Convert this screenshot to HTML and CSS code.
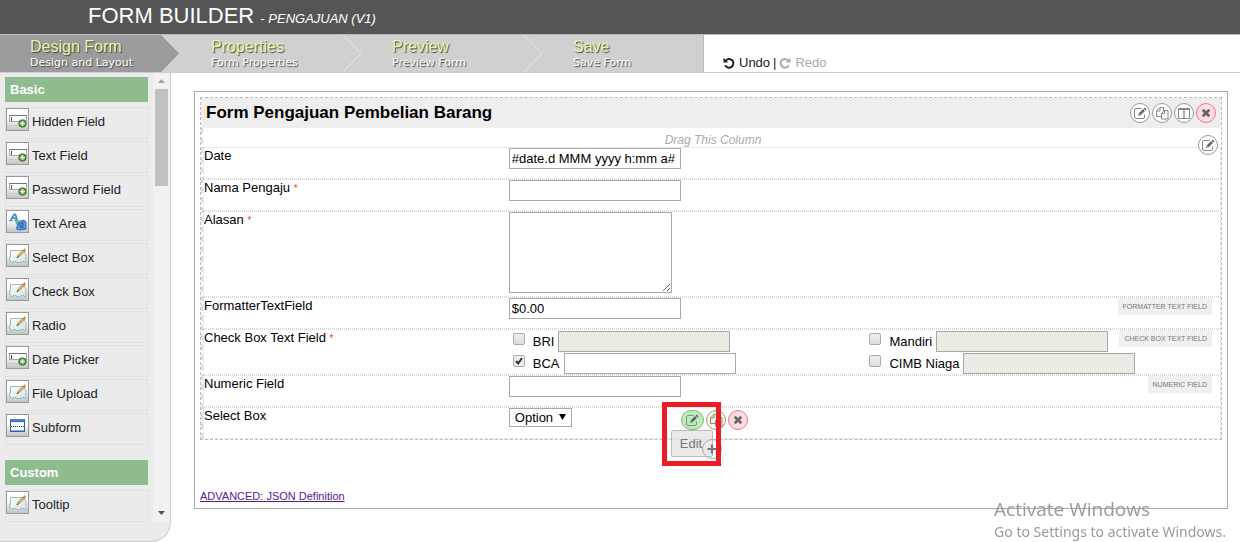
FILE: index.html
```html
<!DOCTYPE html>
<html lang="en">
<head>
<meta charset="utf-8">
<title>Form Builder</title>
<link rel="stylesheet" href="styles.css">
</head>
<body>
<svg class="defs" width="0" height="0" aria-hidden="true">
  <defs>
    <linearGradient id="tile" x1="0" y1="0" x2="0" y2="1"><stop offset="0.4" stop-color="#fff"/><stop offset="1" stop-color="#c4c4c4"/></linearGradient>
    <linearGradient id="paper" x1="0" y1="0" x2="1" y2="1"><stop offset="0" stop-color="#fff"/><stop offset="1" stop-color="#cfe3e5"/></linearGradient>
  </defs>
  <symbol id="p-field" viewBox="0 0 21 21">
    <rect width="21" height="21" fill="url(#tile)"/>
    <path d="M2 16.500H14" stroke="#c8c8c8"/>
    <rect x="2.500" y="6.500" width="17" height="6" fill="#fff" stroke="#a5a5a5"/>
    <path d="M2 6.500H20" stroke="#777"/><path d="M4.500 8v4" stroke="#555"/>
    <circle cx="15.500" cy="14.500" r="3.800" fill="#58943a" stroke="#356e20" stroke-width=".8"/>
    <path d="M15.500 12.200v4.600M13.200 14.500h4.600" stroke="#fff" stroke-width="1.600"/>
  </symbol>
  <symbol id="p-area" viewBox="0 0 21 21">
    <rect width="21" height="21" fill="url(#tile)"/>
    <path d="M2.500 9.500h3M4 8.500l3-5h1.500l1.500 5M8.500 9.500h3M5 7h4.500" fill="none" stroke="#3f7fd0" stroke-width="1.500"/>
    <path d="M8 8l3 6M9 13l4-2" fill="none" stroke="#6db567" stroke-width="1.800"/>
    <path d="M12 10.500l5-1.500 2 2v7l-7 1-3-1.500 2-3.500z" fill="#5f98e2" stroke="#2f6bbd"/>
    <path d="M13 12.500l3-1v3l-3 1zM13 17l4-1" fill="none" stroke="#2b5aa5"/>
  </symbol>
  <symbol id="p-edit" viewBox="0 0 21 21">
    <rect width="21" height="21" fill="url(#tile)"/>
    <path d="M3.500 5.500H17.500V8L19 9v8.500h-2v-1h-3v1H9v-1H6v1H3.500v-2h-1v-3h1z" fill="url(#paper)" stroke="#9dbcc1"/>
    <path d="M11 11.500l6-6" stroke="#9a6b34" stroke-width="2.400"/>
    <path d="M11.300 11.200l5.200-5.200" stroke="#f4c75c" stroke-width="1.200"/>
    <path d="M17 5.500l1.300-1.300" stroke="#c8845c" stroke-width="2.400"/>
    <path d="M9.800 12.700l1.400-.9" stroke="#444" stroke-width="1.100"/>
  </symbol>
  <symbol id="p-subform" viewBox="0 0 21 21">
    <rect width="21" height="21" fill="url(#tile)"/>
    <rect x="3.500" y="4.500" width="14" height="12" fill="#f4f8ff" stroke="#315fac"/>
    <path d="M3 5.500h15" stroke="#3767b5" stroke-width="3"/><path d="M4 5h13" stroke="#6d9bdd"/>
    <path d="M4 11.500h13" stroke="#333" stroke-dasharray="1 1"/>
    <path d="M4 16h13" stroke="#315fac"/>
  </symbol>
  <symbol id="a-edit" viewBox="0 0 18 18">
    <path d="M10.500 4.500H5Q3.500 4.500 3.500 6v7q0 1.500 1.500 1.500h7q1.500 0 1.500-1.500V10.500" fill="none" stroke="#888"/>
    <path d="M8.500 10.500l4.500-4.500" stroke="#666" stroke-width="2.500"/><path d="M13.500 5.500l1.200-1.200" stroke="#666" stroke-width="2.500"/>
    <path d="M7 12l.6-2 1.400 1.400z" fill="#666"/>
  </symbol>
  <symbol id="a-copy" viewBox="0 0 18 18">
    <path d="M8 12.500H3.500V7L7 3.500h3.500V7M7 3.500V7H3.500M8.500 9.500L11 6.500h4v8.500H8.500zM11.500 6.500v3h-3" fill="none" stroke="#888"/>
  </symbol>
  <symbol id="a-cols" viewBox="0 0 18 18">
    <rect x="3.500" y="4.500" width="11" height="10" fill="none" stroke="#888"/><path d="M3 5h12" stroke="#888" stroke-width="2"/><path d="M9 4v10" stroke="#888" stroke-width="1.400"/>
  </symbol>
  <symbol id="a-close" viewBox="0 0 18 18">
    <path d="M5.700 5.700l6.600 6.600M12.300 5.700l-6.600 6.600" stroke="#666" stroke-width="2.700"/>
  </symbol>
  <symbol id="a-plus" viewBox="0 0 18 18">
    <path d="M9 4.500v9M4.500 9h9" stroke="#777" stroke-width="2.200"/>
  </symbol>
  <symbol id="undo" viewBox="0 0 12 12">
    <path d="M2.600 3.800A4.300 4.300 0 1 1 2.200 8.200" fill="none" stroke="currentColor" stroke-width="2"/>
    <path d="M.5.800v4.700h4.700z" fill="currentColor"/>
  </symbol>
</svg>

<header class="top"><h1 class="top-title">FORM BUILDER <i class="top-name">- PENGAJUAN (V1)</i></h1></header>

<nav class="bar">
  <a class="step step-active" href="#design"><span class="step-text"><span class="step-title">Design Form</span><span class="step-note">Design and Layout</span></span>
    <svg class="chevron" viewBox="0 0 19 37" width="19" height="37"><path d="M0 0H19V37H0L18 18.500z" fill="#d0d0d0"/><path d="M0 0L18 18.500L0 37" fill="none" stroke="#e8e8e8"/></svg></a>
  <a class="step" href="#properties"><span class="step-text"><span class="step-title">Properties</span><span class="step-note">Form Properties</span></span>
    <svg class="chevron" viewBox="0 0 19 37" width="19" height="37"><path d="M0 0L18 18.500L0 37" fill="none" stroke="#e8e8e8"/></svg></a>
  <a class="step" href="#preview"><span class="step-text"><span class="step-title">Preview</span><span class="step-note">Preview Form</span></span>
    <svg class="chevron" viewBox="0 0 19 37" width="19" height="37"><path d="M0 0L18 18.500L0 37" fill="none" stroke="#e8e8e8"/></svg></a>
  <a class="step step-last" href="#save"><span class="step-text"><span class="step-title">Save</span><span class="step-note">Save Form</span></span></a>
  <div class="history">
    <button class="hist" type="button"><svg width="12" height="12"><use href="#undo"/></svg>Undo</button>
    <span>|</span>
    <button class="hist hist-off" type="button"><svg class="flip" width="12" height="12"><use href="#undo"/></svg>Redo</button>
  </div>
</nav>

<div class="work">
  <aside class="side">
    <div class="side-view">
      <div class="palette">
        <h2 class="group">Basic</h2>
        <ul class="items">
          <li class="item"><svg class="tile"><use href="#p-field"/></svg>Hidden Field</li>
          <li class="item"><svg class="tile"><use href="#p-field"/></svg>Text Field</li>
          <li class="item"><svg class="tile"><use href="#p-field"/></svg>Password Field</li>
          <li class="item"><svg class="tile"><use href="#p-area"/></svg>Text Area</li>
          <li class="item"><svg class="tile"><use href="#p-edit"/></svg>Select Box</li>
          <li class="item"><svg class="tile"><use href="#p-edit"/></svg>Check Box</li>
          <li class="item"><svg class="tile"><use href="#p-edit"/></svg>Radio</li>
          <li class="item"><svg class="tile"><use href="#p-field"/></svg>Date Picker</li>
          <li class="item"><svg class="tile"><use href="#p-edit"/></svg>File Upload</li>
          <li class="item"><svg class="tile"><use href="#p-subform"/></svg>Subform</li>
        </ul>
        <h2 class="group">Custom</h2>
        <ul class="items">
          <li class="item"><svg class="tile"><use href="#p-edit"/></svg>Tooltip</li>
        </ul>
      </div>
      <div class="scroll" aria-hidden="true">
        <svg width="7" height="4"><path d="M0 4L3.500 0 7 4z" fill="#a3a3a3"/></svg>
        <span class="thumb"></span>
        <svg width="7" height="4"><path d="M0 0L3.500 4 7 0z" fill="#505050"/></svg>
      </div>
    </div>
  </aside>

  <main class="canvas">
    <section class="section">
      <header class="section-head">
        <h2 class="section-title">Form Pengajuan Pembelian Barang</h2>
        <div class="actions">
          <button class="act" type="button" aria-label="Edit section"><svg width="18" height="18"><use href="#a-edit"/></svg></button>
          <button class="act" type="button" aria-label="Copy section"><svg width="18" height="18"><use href="#a-copy"/></svg></button>
          <button class="act" type="button" aria-label="Columns"><svg width="18" height="18"><use href="#a-cols"/></svg></button>
          <button class="act act-del" type="button" aria-label="Delete section"><svg width="18" height="18"><use href="#a-close"/></svg></button>
        </div>
      </header>
      <div class="column">
        <p class="drag">Drag This Column</p>
        <button class="act act-column" type="button" aria-label="Edit column"><svg width="18" height="18"><use href="#a-edit"/></svg></button>
        <div class="rows">
          <div class="row"><label class="label" for="date">Date</label><div class="field"><input class="text" id="date" type="text" value="#date.d MMM yyyy h:mm a#"></div></div>
          <div class="row"><label class="label" for="nama">Nama Pengaju <span class="req">*</span></label><div class="field"><input class="text" id="nama" type="text"></div></div>
          <div class="row"><label class="label" for="alasan">Alasan <span class="req">*</span></label><div class="field"><textarea class="area" id="alasan"></textarea></div></div>
          <div class="row"><label class="label" for="fmt">FormatterTextField</label><div class="field"><input class="text" id="fmt" type="text" value="$0.00"></div><span class="kind">FORMATTER TEXT FIELD</span></div>
          <div class="row"><span class="label">Check Box Text Field <span class="req">*</span></span>
            <div class="field checks">
              <div class="check"><input class="tick" type="checkbox" id="bri"><label for="bri">BRI</label><input class="text" type="text" aria-label="BRI value" disabled></div>
              <div class="check"><input class="tick" type="checkbox" id="mandiri"><label for="mandiri">Mandiri</label><input class="text" type="text" aria-label="Mandiri value" disabled></div>
              <div class="check"><input class="tick" type="checkbox" id="bca" checked><label for="bca">BCA</label><input class="text" type="text" aria-label="BCA value"></div>
              <div class="check"><input class="tick" type="checkbox" id="cimb"><label for="cimb">CIMB Niaga</label><input class="text" type="text" aria-label="CIMB Niaga value" disabled></div>
            </div><span class="kind">CHECK BOX TEXT FIELD</span></div>
          <div class="row"><label class="label" for="num">Numeric Field</label><div class="field"><input class="text" id="num" type="text"></div><span class="kind">NUMERIC FIELD</span></div>
          <div class="row"><label class="label" for="sel">Select Box</label>
            <div class="field pick"><select class="select" id="sel"><option>Option</option></select><svg class="caret" width="7" height="6"><path d="M0 0h7L3.500 6z"/></svg>
              <div class="tools">
                <button class="act act-edit" type="button" aria-label="Edit"><svg width="18" height="18"><use href="#a-edit"/></svg></button>
                <button class="act act-copy" type="button" aria-label="Copy"><svg width="18" height="18"><use href="#a-copy"/></svg></button>
                <button class="act act-del" type="button" aria-label="Delete"><svg width="18" height="18"><use href="#a-close"/></svg></button>
                <span class="tip">Edit</span>
                <button class="act act-add" type="button" aria-label="Add"><svg width="18" height="18"><use href="#a-plus"/></svg></button>
                <span class="highlight"></span>
              </div>
            </div>
          </div>
        </div>
      </div>
    </section>
    <a class="advanced" href="#json">ADVANCED: JSON Definition</a>
  </main>
</div>
<div class="notice"><p class="notice-title">Activate Windows</p><p class="notice-text">Go to Settings to activate Windows.</p></div>
</body>
</html>
```
FILE: styles.css
```css
* { box-sizing: border-box; }
body {
  margin: 0;
  min-height: 100vh;
  display: flex;
  flex-direction: column;
  background: #fff;
  color: #000;
  font: 13px/15px "Liberation Sans", Arial, sans-serif;
}
h1, h2, p, ul { margin: 0; padding: 0; }
button, input, textarea, select { font: inherit; color: inherit; margin: 0; }
button { padding: 0; border: 0; background: none; }
svg { flex: none; display: block; }
.defs { position: absolute; }

.top { background: #555; color: #fff; padding: 3px 88px 5px; }
.top-title { font-size: 22px; line-height: 26px; font-weight: 400; }
.top-name { font-size: 13px; line-height: 13px; }

.bar { display: flex; border-top: 1px solid #bbb; border-bottom: 1px solid #ccc; }
.step {
  width: 181px;
  height: 37px;
  padding-left: 30px;
  display: flex;
  justify-content: space-between;
  background: #d0d0d0;
  text-decoration: none;
}
.step-active { background: #9c9c9c; }
.step-last { width: 161px; border-right: 1px solid #bbb; }
.step-text { display: flex; flex-direction: column; padding-top: 3px; white-space: nowrap; text-shadow: 1px 1px 1px #444; }
.step-title { font-size: 16px; line-height: 18px; color: #e9f7aa; }
.step-note { font: 11px/14px "DejaVu Sans", Verdana, sans-serif; color: #fff; }
.chevron { overflow: hidden; }
.history { display: flex; align-items: flex-end; gap: 3px; padding: 0 0 2px 19px; color: #222; }
.hist { display: flex; align-items: center; gap: 4px; }
.hist-off { color: #aaa; }
.flip { transform: scaleX(-1); }

.work { flex: 1; display: flex; align-items: stretch; }
.side { width: 171px; flex: none; background: #ebebeb; border-right: 1px solid #ccc; border-bottom: 1px solid #ccc; border-bottom-right-radius: 20px; padding-bottom: 19px; }
.side-view { display: flex; justify-content: space-between; }
.palette { flex: 1; padding: 4px 5px 0; }
.group { background: #8fbc8f; color: #fff; font-size: 13px; line-height: 25px; padding-left: 5px; margin-bottom: 5px; }
.items { list-style: none; display: flex; flex-direction: column; gap: 2px; }
.items + .group { margin-top: 15px; }
.item { display: flex; gap: 3px; height: 32px; border: 1px dotted #d8d8d8; line-height: 27px; color: #222; white-space: nowrap; }
.tile { width: 23px; height: 23px; border: 1px solid #999; }
.scroll { width: 17px; flex: none; background: #f1f1f1; display: flex; flex-direction: column; align-items: center; padding: 6px 0 7px; }
.thumb { width: 13px; height: 97px; background: #c1c1c1; margin: 6px 0 auto; }

.canvas { flex: 1; align-self: flex-start; margin: 18px 12px 33px 23px; border: 1px solid #aaa; padding: 5px 5px 4px; }
.section { border: 1px dashed #bbb; }
.section-head { display: flex; justify-content: space-between; align-items: center; background: #eee; padding: 0 5px; height: 30px; }
.section-title { font-size: 17px; line-height: 28px; }
.actions { display: flex; gap: 2px; }
.act { width: 20px; height: 20px; border: 1px solid #999; border-radius: 10px; background: #fff; flex: none; display: flex; align-items: center; justify-content: center; }
.act-del { border-color: #f3738f; background: #fddde3; }
.column { position: relative; border-left: 2px dashed #ddd; padding-top: 5px; }
.act-column { position: absolute; top: 7px; right: 3px; z-index: 1; }
.drag { color: #aaa; font-size: 12px; line-height: 14px; font-style: italic; text-align: center; padding-left: 2px; }
.row { position: relative; display: flex; min-height: 32px; border: 1px dotted #d8d8d8; }
.label { width: 30%; flex: none; }
.req { color: #f33; font-size: 10px; }
.field { flex: 1; }
.text { display: block; width: 172px; height: 21px; padding: 1px 2px; border: 1px solid #a9a9a9; background: #fff; }
.text:disabled { background: #ebebe4; }
.area { display: block; width: 163px; height: 81px; margin-bottom: 3px; padding: 2px; border: 1px solid #a9a9a9; resize: both; }
.checks { display: grid; grid-template-columns: 1fr 1fr; gap: 1px 2px; padding-top: 1px; }
.check { display: flex; gap: 4px; line-height: 21px; padding-left: 4px; }
.tick { appearance: none; width: 12px; height: 12px; margin: 2px 4px 0 0; border: 1px solid #aaa; border-radius: 2px; background: linear-gradient(#eee, #ddd); }
.tick:checked { background: #eee url("data:image/svg+xml,%3Csvg xmlns='http://www.w3.org/2000/svg' viewBox='0 0 10 10'%3E%3Cpath d='M2 5l2.200 2.500L8 2' fill='none' stroke='%23333' stroke-width='2'/%3E%3C/svg%3E"); }
.kind { position: absolute; top: 0; right: 8px; padding: 0 5px; font-size: 7px; line-height: 17px; background: #f0f0f0; color: #777; }
.pick { position: relative; }
.select { appearance: none; display: block; width: 63px; height: 19px; border: 1px solid #a9a9a9; background: #fff; padding: 0 5px; border-radius: 0; }
.caret { position: absolute; top: 6px; left: 50px; pointer-events: none; }
.tools { position: absolute; top: 2px; left: 172px; display: flex; gap: 2px; }
.act-edit { width: 23px; background: #b9efb4; border-color: #8cae88; }
.act-copy { background: #f5fbdc; }
.act-add { position: absolute; top: 29px; left: 21px; background: none; border-color: #aaa; }
.tip { position: absolute; top: 20px; left: -10px; width: 42px; padding: 5px 8px; background: rgba(230, 230, 230, 0.85); border: 1px solid #bbb; border-radius: 2px; color: #777; }
.highlight { position: absolute; top: -8px; left: -19px; width: 59px; height: 64px; border: 5px solid #ed1c24; }
.advanced { display: inline-block; margin-top: 49px; font-size: 11px; color: #551a8b; }
.notice { position: fixed; right: 14px; bottom: 0; color: #999; pointer-events: none; }
.notice-title { font: 19px/26px "Open Sans", "Segoe UI", sans-serif; }
.notice-text { font: 14px/20px "Noto Sans", "Segoe UI", sans-serif; }
```
